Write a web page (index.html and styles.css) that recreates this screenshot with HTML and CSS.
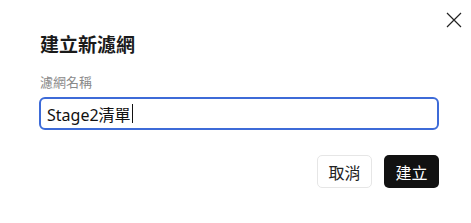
FILE: index.html
```html
<!DOCTYPE html>
<html lang="zh-Hant">
<head>
    <meta charset="UTF-8">
    <link rel="stylesheet" href="styles.css">
</head>
<body>
    <div class="dialog">
        <button class="close" aria-label="關閉">
            <svg width="16" height="16" viewBox="0 0 16 16"><path d="M1 1L15 15M15 1L1 15" stroke="#222" stroke-width="1.2" fill="none"/></svg>
        </button>
        <h2 class="title">建立新濾網</h2>
        <label class="label" for="filterName">濾網名稱</label>
        <div class="field"><span class="value">Stage2清單</span><span class="caret"></span></div>
        <div class="actions">
            <button class="btn cancel">取消</button>
            <button class="btn create">建立</button>
        </div>
    </div>
</body>
</html>
```

FILE: styles.css
```css
body {
    margin: 0;
    background: #fff;
    font-family: "Noto Sans", "Noto Sans CJK TC", sans-serif;
    color: #111;
}

.dialog {
    position: relative;
    width: 471px;
    height: 223px;
    box-sizing: border-box;
    padding: 33px 32px 0 39px;
}

.close {
    position: absolute;
    top: 12px;
    left: 446px;
    padding: 0;
    border: none;
    background: none;
    width: 16px;
    height: 16px;
}

.close svg {
    display: block;
}

.title {
    margin: 0 0 0 1px;
    font-size: 19px;
    line-height: 24px;
    font-weight: 700;
    color: #1a1a1a;
}

.label {
    display: block;
    margin: 16px 0 0 1px;
    font-size: 13px;
    line-height: 18px;
    color: #8a8a8a;
}

.field {
    display: flex;
    align-items: center;
    margin-top: 6px;
    width: 400px;
    height: 33px;
    box-sizing: border-box;
    border: 2px solid #3d6bd8;
    border-radius: 6px;
    padding: 0 6px;
    font-size: 16px;
}

.value {
    color: #111;
}

.caret {
    width: 1px;
    height: 19px;
    background: #111;
    margin-left: 1px;
}

.actions {
    display: flex;
    justify-content: flex-end;
    gap: 12px;
    margin-top: 25px;
    width: 400px;
}

.btn {
    height: 33px;
    width: 55px;
    border-radius: 5px;
    font-family: inherit;
    font-size: 16px;
    padding: 0;
}

.cancel {
    background: #fff;
    border: 1px solid #e6e6e6;
    color: #222;
}

.create {
    background: #111;
    border: none;
    color: #fff;
}
```
